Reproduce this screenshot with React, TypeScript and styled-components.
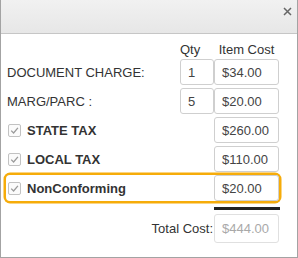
import React from 'react';
import styled, { createGlobalStyle } from 'styled-components';

const GlobalStyle = createGlobalStyle`
  html, body {
    margin: 0;
    padding: 0;
    background: #fff;
  }
  body {
    font-family: 'Liberation Sans', Arial, sans-serif;
    font-size: 13px;
    color: #333;
  }
`;

type Line = { label: string; qty?: string; cost: string; taxed?: boolean; highlight?: boolean };

const lines: Line[] = [
  { label: 'DOCUMENT CHARGE:', qty: '1', cost: '$34.00' },
  { label: 'MARG/PARC :', qty: '5', cost: '$20.00' },
  { label: 'STATE TAX', cost: '$260.00', taxed: true },
  { label: 'LOCAL TAX', cost: '$110.00', taxed: true },
  { label: 'NonConforming', cost: '$20.00', taxed: true, highlight: true },
];

const CheckMark = () => (
  <Check>
    <svg width="9" height="9" viewBox="0 0 9 9">
      <path d="M1.2 4.6 L3.6 7 L7.9 1.8" fill="none" stroke="#9a9a9a" strokeWidth="1.3" />
    </svg>
  </Check>
);

const App = () => {
  return (
    <>
      <GlobalStyle />
      <Window>
        <TitleBar>
          <CloseButton aria-label="close">
            <svg width="9" height="9" viewBox="0 0 9 9">
              <path d="M1 1 L8 8 M8 1 L1 8" stroke="#666" strokeWidth="1.5" />
            </svg>
          </CloseButton>
        </TitleBar>
        <Body>
          <HeadRow>
            <span />
            <span>Qty</span>
            <CostHead>Item Cost</CostHead>
          </HeadRow>
          {lines.map((line) => (
            <ItemRow key={line.label} $highlight={line.highlight}>
              {line.taxed ? (
                <TaxLabel>
                  <CheckMark />
                  {line.label}
                </TaxLabel>
              ) : (
                <Label>{line.label}</Label>
              )}
              {line.qty ? <Field>{line.qty}</Field> : <span />}
              <Field>{line.cost}</Field>
            </ItemRow>
          ))}
          <Rule />
          <TotalRow>
            <TotalLabel>Total Cost:</TotalLabel>
            <TotalField>$444.00</TotalField>
          </TotalRow>
        </Body>
      </Window>
    </>
  );
};

const Window = styled.div`
  width: 298px;
  height: 258px;
  box-sizing: border-box;
  border: 1px solid #a3a3a3;
  border-top: none;
  display: flex;
  flex-direction: column;
`;

const TitleBar = styled.div`
  height: 33px;
  flex: none;
  display: flex;
  justify-content: flex-end;
  align-items: flex-start;
  background: linear-gradient(#f1f1f1, #e7e7e7);
  border-bottom: 1px solid #c6c6c6;
`;

const CloseButton = styled.div`
  width: 9px;
  height: 9px;
  margin: 7px 5px 0 0;
  line-height: 0;
`;

const Body = styled.div`
  display: flex;
  flex-direction: column;
  gap: 3px;
  padding: 8px 18px 0 5px;
`;

const Row = styled.div`
  display: grid;
  grid-template-columns: 1fr 34px 65px;
  align-items: center;
  line-height: 15px;
`;

const HeadRow = styled(Row)`
  height: 14px;
  align-items: end;
`;

const ItemRow = styled(Row)<{ $highlight?: boolean }>`
  height: 26px;
  border-radius: 4px;
  box-shadow: ${(p) => (p.$highlight ? '0 0 0 2.5px #f6ac0a' : 'none')};
`;

const CostHead = styled.span`
  text-align: center;
`;

const Label = styled.span`
  padding-left: 1px;
  white-space: nowrap;
`;

const TaxLabel = styled.span`
  display: flex;
  align-items: center;
  gap: 6px;
  padding-left: 2px;
  font-weight: bold;
  white-space: nowrap;
`;

const Check = styled.span`
  width: 11px;
  height: 11px;
  border: 1px solid #c2c2c2;
  border-radius: 2px;
  background: #fbfbfb;
  display: flex;
  align-items: center;
  justify-content: center;
`;

const Field = styled.div`
  height: 26px;
  box-sizing: border-box;
  border: 1px solid #cfcfcf;
  border-radius: 3px;
  padding: 0 7px;
  display: flex;
  align-items: center;
  color: #444;
  background: #fff;
`;

const Rule = styled.div`
  height: 3px;
  width: 66px;
  align-self: flex-end;
  margin: 3px -1px 1px 0;
  background: #222;
`;

const TotalRow = styled.div`
  display: flex;
  justify-content: flex-end;
  align-items: center;
`;

const TotalLabel = styled.span`
  margin-right: 1px;
`;

const TotalField = styled(Field)`
  width: 65px;
  height: 29px;
  border-color: #e0e0e0;
  color: #a9a9a9;
`;

export default App;
